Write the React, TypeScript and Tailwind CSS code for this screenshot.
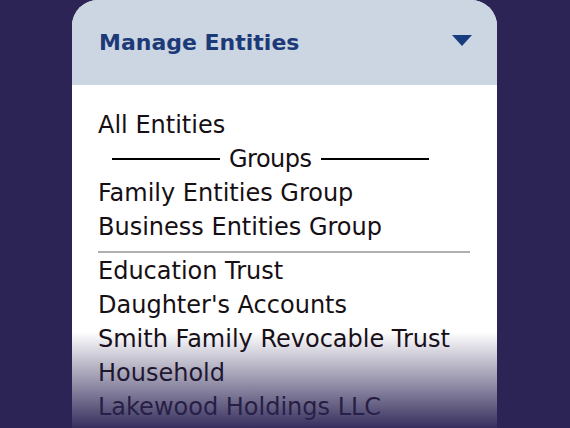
import React from "react";

const groups = ["Family Entities Group", "Business Entities Group"];
const entities = [
  "Education Trust",
  "Daughter's Accounts",
  "Smith Family Revocable Trust",
  "Household",
  "Lakewood Holdings LLC",
];

export default function App() {
  return (
    <div
      className="relative h-[428px] w-[570px] overflow-hidden bg-[#2c2455]"
      style={{ fontFamily: "'DejaVu Sans', sans-serif" }}
    >
      <div className="ml-[72px] w-[425px] overflow-hidden rounded-t-[26px] bg-white">
        {/* header */}
        <div className="flex h-[85px] items-center justify-between bg-[#ccd5e2] pl-[27px] pr-[25px]">
          <div className="text-[22px] font-bold text-[#1d3a78]">Manage Entities</div>
          <svg width="20" height="11" viewBox="0 0 20 11" className="mt-[-4px]">
            <path d="M0 0 H20 L10 11 Z" fill="#173d7e" />
          </svg>
        </div>

        {/* list */}
        <div className="px-[26px] pb-10 pt-[23px] text-[24px] leading-[34px] text-[#160f14]">
          <div>All Entities</div>
          <div className="flex items-center pl-[14px]">
            <div className="h-[2px] w-[108px] bg-black" />
            <span className="px-[9px] tracking-[-0.5px]">Groups</span>
            <div className="h-[2px] w-[108px] bg-black" />
          </div>
          {groups.map((g) => (
            <div key={g}>{g}</div>
          ))}
          <div className="mb-[1px] mt-[7px] h-[2px] w-[372px] bg-[#b0b0b0]" />
          {entities.map((e) => (
            <div key={e}>{e}</div>
          ))}
        </div>
      </div>

      {/* fade */}
      <div className="absolute inset-x-0 bottom-0 h-[96px] bg-gradient-to-b from-[#2c2455]/0 to-[#2c2455]/95" />
    </div>
  );
}
